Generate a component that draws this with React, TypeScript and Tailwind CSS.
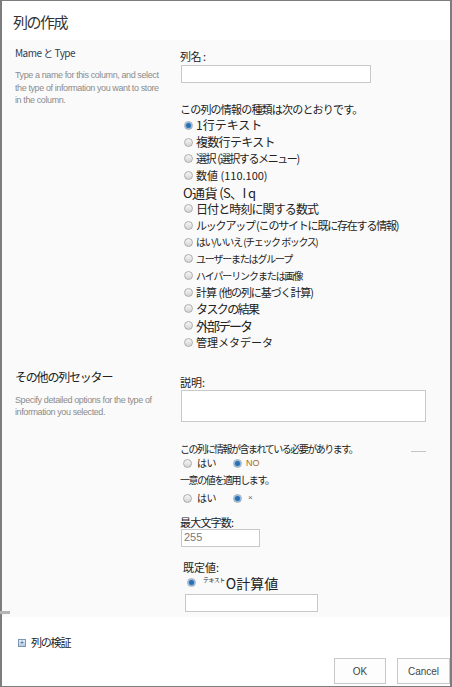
import React from "react";

const jp = { fontFamily: '"Noto Sans CJK JP", "Noto Sans", sans-serif' };
const latin = { fontFamily: '"Liberation Sans", "Noto Sans CJK JP", sans-serif' };

function Radio({ checked = false }: { checked?: boolean }) {
  return (
    <span className="inline-flex h-[9px] w-[9px] shrink-0 items-center justify-center rounded-full border border-[#adadad] bg-gradient-to-b from-[#f6f6f6] to-[#d4d4d4]">
      {checked && <span className="h-[5px] w-[5px] rounded-full bg-[#2c6fb0] ring-1 ring-[#8ab8e0]" />}
    </span>
  );
}

// font size / letter spacing tuned per label to follow the narrow glyphs of the original
const types: { label: string; cls: string; checked?: boolean; noRadio?: boolean }[] = [
  { label: "1行テキスト", cls: "text-[12px]", checked: true },
  { label: "複数行テキスト", cls: "text-[12px] tracking-[-0.7px]" },
  { label: "選択\u00a0 (選択するメニュー)", cls: "text-[11px] tracking-[-1.4px]" },
  { label: "数値 (110.100)", cls: "text-[11px]" },
  { label: "O通貨 (S、I q", cls: "text-[13px] tracking-[-0.6px]", noRadio: true },
  { label: "日付と時刻に関する数式", cls: "text-[12px] tracking-[-0.9px]" },
  { label: "ルックアップ (このサイトに既に存在する情報)", cls: "text-[11px] tracking-[-1.2px]" },
  { label: "はい/いいえ\u00a0 (チェック\u00a0 ボックス)", cls: "text-[10px] tracking-[-1.4px]" },
  { label: "ユーザーまたはグループ", cls: "text-[10px] tracking-[-1.2px]" },
  { label: "ハイパーリンクまたは画像", cls: "text-[10px] tracking-[-1.1px]" },
  { label: "計算\u00a0 (他の列に基づく計算)", cls: "text-[11px] tracking-[-1.1px]" },
  { label: "タスクの結果", cls: "text-[12px] tracking-[-1.6px]" },
  { label: "外部データ", cls: "text-[13px] tracking-[-2px]" },
  { label: "管理メタデータ", cls: "text-[11px]" },
];

export default function App() {
  return (
    <div className="flex h-[687px] w-[452px] flex-col border-t border-b border-l-2 border-r-2 border-[#7d7d7d] bg-white text-[#222]" style={jp}>
      {/* Title */}
      <div className="h-[39px] pl-[11px] pt-[11px] text-[15px] leading-[20px] tracking-[-1.5px] text-[#333]">列の作成</div>

      <div className="relative flex flex-col bg-[#fafafa] pb-[5px]">
        {/* Name and type */}
        <div className="flex">
          <div className="w-[178px] shrink-0 pl-[13px] pt-[6px]">
            <div className="text-[10px] leading-[14px] tracking-[-0.5px] text-[#2f3c55]">Mame と Type</div>
            <p className="mt-[9px] whitespace-nowrap text-[9px] leading-[12.5px] tracking-[-0.4px] text-[#8c8c8c]" style={latin}>
              Type a name for this column, and select
              <br />
              the type of information you want to store
              <br />
              in the column.
            </p>
          </div>
          <div className="flex-1 pt-[9px]">
            <div className="text-[11px] leading-[14px] tracking-[-0.5px]">列名 :</div>
            <div className="ml-[1px] mt-[2px] h-[18px] w-[190px] border border-[#c8c8c8] bg-white" />
            <div className="mt-[19px] whitespace-nowrap text-[11px] leading-[14px] tracking-[-0.8px]">この列の情報の種類は次のとおりです。</div>
            <div className="mt-[1px] flex flex-col">
              {types.map((t) => (
                <div key={t.label} className={`flex h-[16.7px] items-center whitespace-nowrap leading-none ${t.noRadio ? "pl-[3px]" : "pl-[4px]"} ${t.cls}`}>
                  {!t.noRadio && <Radio checked={t.checked} />}
                  <span className={t.noRadio ? "" : "ml-[3px]"}>{t.label}</span>
                </div>
              ))}
            </div>
          </div>
        </div>

        {/* Additional settings */}
        <div className="mt-[18px] flex">
          <div className="w-[178px] shrink-0 pl-[13px]">
            <div className="text-[12px] leading-[16px] tracking-[-1.2px] text-[#222]">その他の列セッター</div>
            <p className="mt-[9px] whitespace-nowrap text-[9px] leading-[12px] tracking-[-0.4px] text-[#8c8c8c]" style={latin}>
              Specify detailed options for the type of
              <br />
              information you selected.
            </p>
          </div>
          <div className="flex-1 pt-[6px]">
            <div className="text-[11px] leading-[14px]">説明:</div>
            <div className="ml-[1px] mt-[1px] h-[32px] w-[245px] border border-[#c8c8c8] bg-white" />

            <div className="mt-[22px] flex h-[11px] w-[246px] items-center whitespace-nowrap text-[10px] leading-none tracking-[-1.5px]">
              <span>この列に情報が含まれている必要があります。</span>
              <span className="ml-auto mt-[4px] h-px w-[15px] bg-[#c4c4c4]" />
            </div>
            <div className="mt-[3px] flex h-[11px] items-center pl-[3px] text-[10px] leading-none">
              <Radio />
              <span className="ml-[5px] tracking-[-0.5px]">はい</span>
              <span className="ml-[17px] flex"><Radio checked /></span>
              <span className="ml-[4px] text-[9px] text-[#a86a1c]" style={latin}>NO</span>
            </div>
            <div className="mt-[5px] h-[11px] whitespace-nowrap text-[10px] leading-[11px] tracking-[-1.4px]">一意の値を適用します。</div>
            <div className="mt-[8px] flex h-[11px] items-center pl-[3px] text-[10px] leading-none">
              <Radio />
              <span className="ml-[5px] tracking-[-0.5px]">はい</span>
              <span className="ml-[17px] flex"><Radio checked /></span>
              <span className="ml-[6px] text-[8px] text-[#666]" style={latin}>×</span>
            </div>
            <div className="mt-[12px] text-[11px] leading-[12px] tracking-[-0.8px]">最大文字数:</div>
            <div className="ml-[1px] mt-[1px] flex h-[18px] w-[79px] items-center border border-[#c8c8c8] bg-white pl-[2px] text-[11px] text-[#7a7a7a]" style={latin}>255</div>

            <div className="ml-[3px] mt-[14px] text-[11px] leading-[12px]">既定値:</div>
            <div className="mt-[4px] flex h-[12px] items-center pl-[7px] leading-none">
              <Radio checked />
              <span className="ml-[7px] -mt-[5px] text-[6px] leading-none tracking-[-0.5px]">テキスト</span>
              <span className="ml-[1px] text-[14px] leading-none">O計算値</span>
            </div>
            <div className="ml-[5px] mt-[5px] h-[18px] w-[133px] border border-[#c8c8c8] bg-white" />
          </div>
        </div>

        <span className="absolute bottom-[3px] left-[-2px] h-[3px] w-[10px] bg-[#b4b4b4]" />
      </div>

      {/* Validation */}
      <div className="mt-[19px] flex h-[14px] items-center pl-[16px] text-[11px] tracking-[-1.2px]">
        <span className="flex h-[8px] w-[8px] items-center justify-center border border-[#7d95b5] bg-gradient-to-b from-[#eaf0f8] to-[#b8c9e0] text-[7px] leading-none tracking-normal text-[#2d4f7c]">+</span>
        <span className="ml-[5px]">列の検証</span>
      </div>

      {/* Buttons */}
      <div className="mt-auto flex justify-end gap-[11px] pb-[2px]">
        <button className="h-[26px] w-[52px] border border-[#c8c8c8] bg-[#fdfdfd] text-[10px] text-[#444]" style={latin}>OK</button>
        <button className="h-[26px] w-[53px] border border-[#c8c8c8] bg-[#fdfdfd] text-[10px] text-[#444]" style={latin}>Cancel</button>
      </div>
    </div>
  );
}
